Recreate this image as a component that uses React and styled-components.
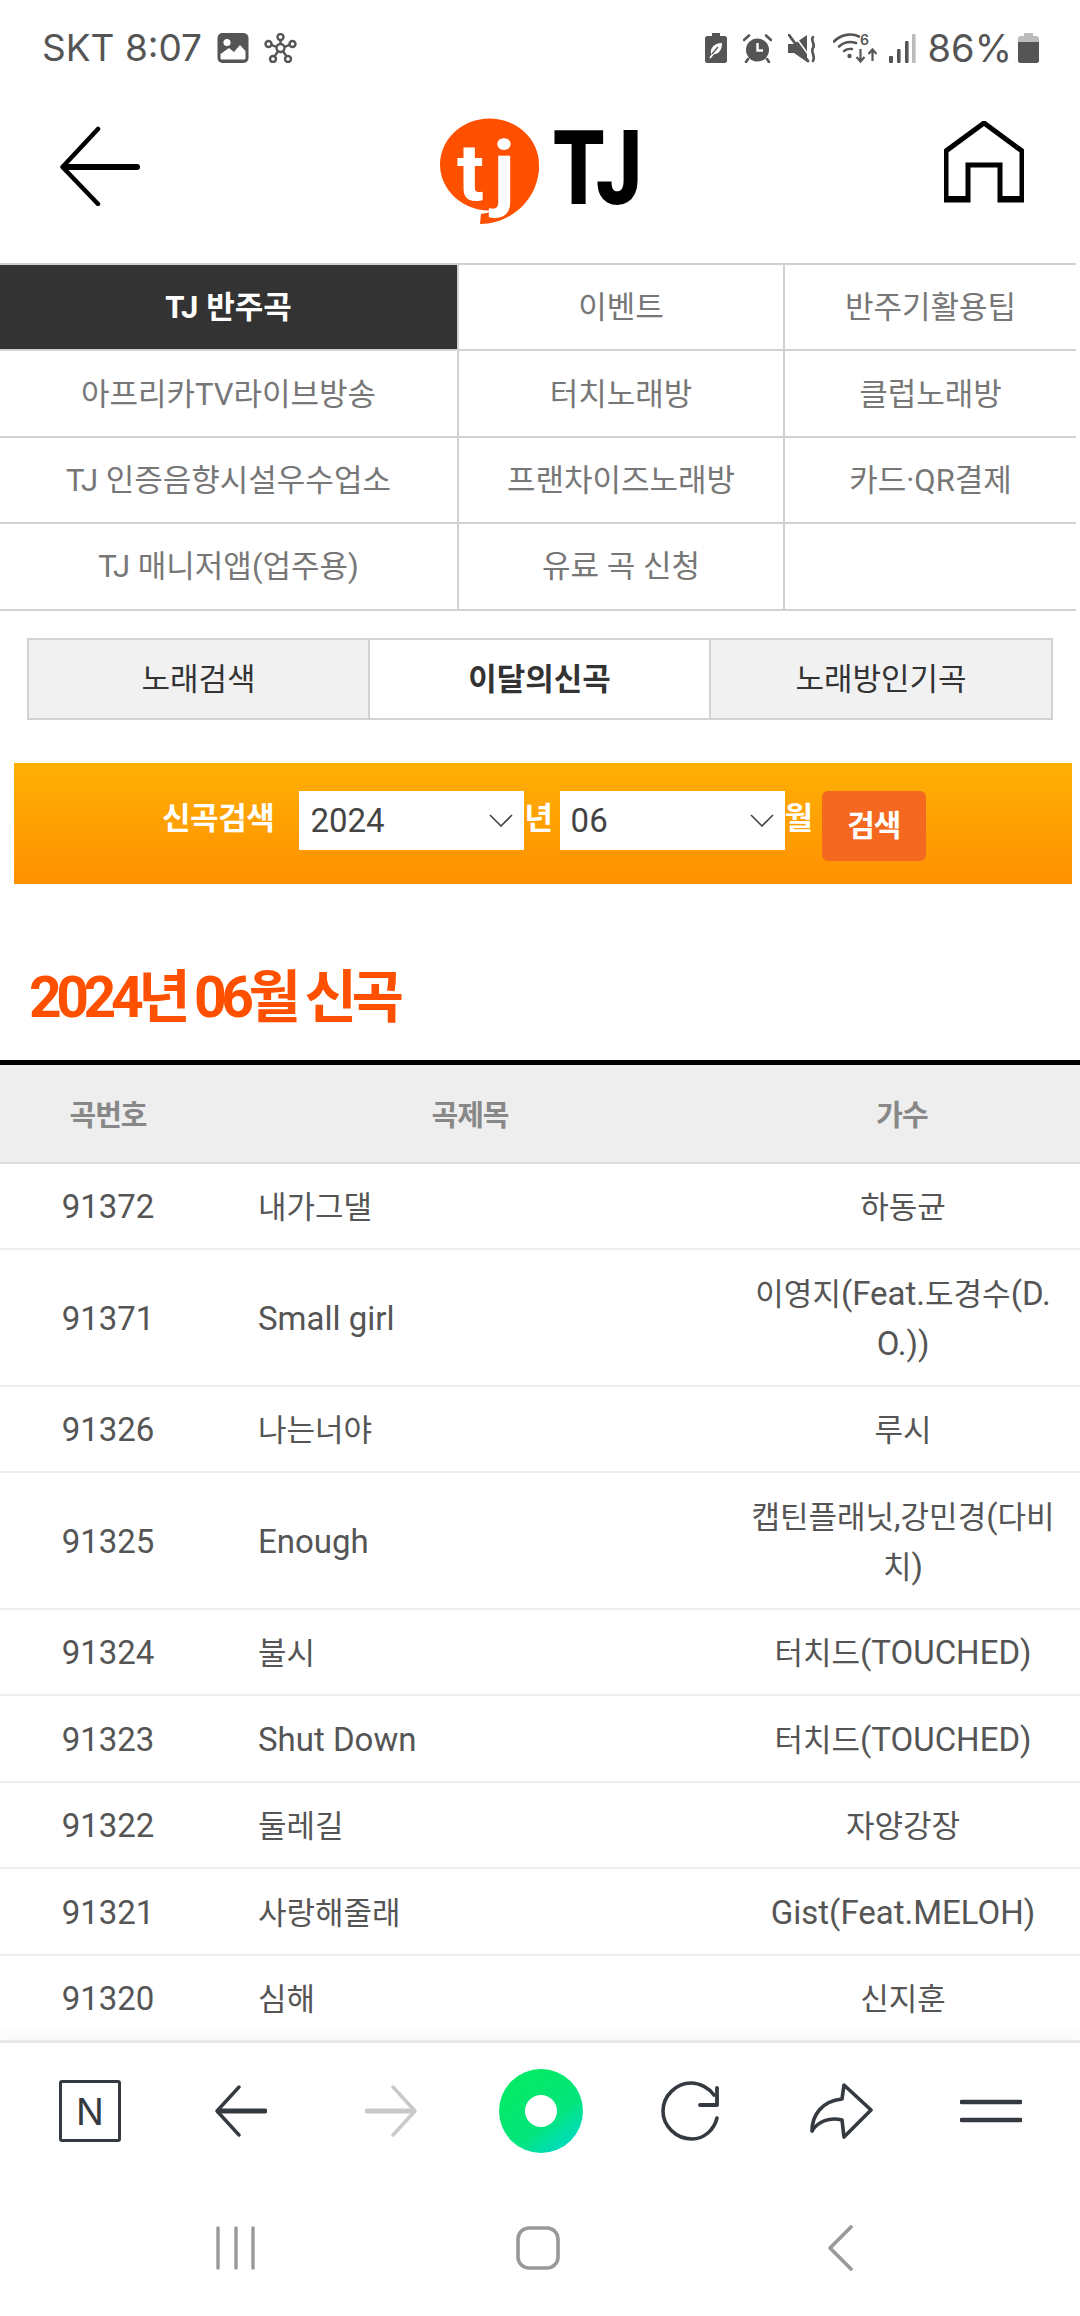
import React from 'react';
import styled, { createGlobalStyle } from 'styled-components';

const Global = createGlobalStyle`
  html, body { margin: 0; padding: 0; background: #fff; }
  body { font-family: Roboto, "Noto Sans CJK KR", sans-serif; }
  * { box-sizing: border-box; }
`;

const Screen = styled.div`
  width: 1080px;
  height: 2316px;
  display: flex;
  flex-direction: column;
  overflow: hidden;
  background: #fff;
`;

const StatusBar = styled.div`
  height: 96px;
  flex: none;
  display: flex;
  align-items: center;
  justify-content: space-between;
  padding: 0 41px 0 42px;
  color: #555;
`;
const StatusGroup = styled.div`
  display: flex;
  align-items: center;
  gap: ${p => p.$gap}px;
`;
const StatusText = styled.span`
  font-family: Inter, Roboto, sans-serif;
  font-size: ${p => p.$size || 37}px;
  line-height: 40px;
  font-weight: 400;
  white-space: nowrap;
`;

const Header = styled.header`
  height: 167px;
  flex: none;
  padding: 0 56px 27px 60px;
  display: flex;
  align-items: center;
  justify-content: space-between;
`;
const Logo = styled.svg`
  display: block;
  margin-left: 2px;
  margin-top: 10px;
`;
const HomeLink = styled.a`
  display: block;
  margin-top: -4px;
`;

const Menu = styled.nav`
  width: 1076px;
  flex: none;
  display: grid;
  grid-template-columns: 459px 326px 291px;
  border-top: 2px solid #d2d2d2;
`;
const MenuCell = styled.div`
  height: 86.4px;
  padding-bottom: 5px;
  display: flex;
  align-items: center;
  justify-content: center;
  border-bottom: 2px solid #d2d2d2;
  border-right: ${p => (p.$last ? 'none' : '2px solid #d2d2d2')};
  background: ${p => (p.$active ? '#333' : '#fff')};
  color: ${p => (p.$active ? '#fff' : '#777')};
  font-size: 31px;
  font-weight: ${p => (p.$active ? 700 : 400)};
`;

const Tabs = styled.div`
  width: 1026px;
  height: 82px;
  flex: none;
  margin: 27px 0 0 27px;
  display: grid;
  grid-template-columns: 339px 343px 1fr;
  border: 2px solid #d2d2d2;
`;
const Tab = styled.div`
  padding-bottom: 4px;
  display: flex;
  align-items: center;
  justify-content: center;
  background: ${p => (p.$active ? '#fff' : '#f1f1f1')};
  border-left: ${p => (p.$active ? '2px solid #d2d2d2' : 'none')};
  border-right: ${p => (p.$active ? '2px solid #d2d2d2' : 'none')};
  color: #333;
  font-size: 31px;
  font-weight: ${p => (p.$active ? 700 : 400)};
`;

const SearchBand = styled.div`
  width: 1058px;
  height: 121px;
  flex: none;
  margin: 43px 0 0 14px;
  padding: 28px 0 0 148px;
  display: flex;
  align-items: flex-start;
  background: linear-gradient(#ffb005, #ff9000);
`;
const BandLabel = styled.span`
  color: #fff;
  font-size: 31px;
  font-weight: 700;
  line-height: 56px;
  letter-spacing: -0.4px;
  margin: ${p => p.$margin || '0'};
  white-space: nowrap;
`;
const SelectBox = styled.div`
  width: 225px;
  height: 59px;
  padding: 0 11px;
  display: flex;
  align-items: center;
  justify-content: space-between;
  background: #fff;
  color: #444;
  font-size: 33px;
`;
const SearchButton = styled.button`
  width: 104px;
  height: 70px;
  margin-left: 9px;
  padding: 0 0 5px;
  border: 0;
  border-radius: 6px;
  background: #f4691f;
  color: #fff;
  font-family: inherit;
  font-size: 30px;
  font-weight: 700;
  letter-spacing: -1px;
`;

const PageTitle = styled.h2`
  height: 176px;
  flex: none;
  margin: 0;
  padding: 85px 0 0 29px;
  font-size: 57px;
  line-height: 58px;
  font-weight: 700;
  letter-spacing: -5.4px;
  color: #ff5000;
  white-space: nowrap;
`;

const SongTable = styled.table`
  width: 1080px;
  flex: none;
  table-layout: fixed;
  border-collapse: separate;
  border-spacing: 0;
  border-top: 5px solid #000;
`;
const HeadCell = styled.th`
  height: 99px;
  padding: 0;
  background: #eee;
  border-bottom: 2px solid #ddd;
  color: #888;
  font-size: 29px;
  font-weight: 700;
  letter-spacing: -1px;
  text-align: center;
`;
const Cell = styled.td`
  padding: 19.75px ${p => (p.$artist ? '16px' : '0')} 14.75px ${p => (p.$title ? '42px' : p.$artist ? '18px' : '0')};
  border-bottom: 2px solid #eee;
  color: #555;
  font-size: 31px;
  line-height: 50px;
  font-weight: 400;
  text-align: ${p => (p.$title ? 'left' : 'center')};
  word-break: break-all;
`;
const LatinRun = styled.span`
  font-size: 33px;
  line-height: 1;
`;

const Content = styled.main`
  flex: 1;
  min-height: 0;
  display: flex;
  flex-direction: column;
  overflow: hidden;
`;

const Toolbar = styled.div`
  height: 138px;
  flex: none;
  display: grid;
  grid-template-columns: repeat(7, 150px);
  padding-left: 16px;
  place-items: center;
  background: #fff;
  border-top: 2px solid #e4e6e8;
  box-shadow: 0 -8px 12px rgba(60, 70, 90, 0.035);
  position: relative;
`;
const NaverBox = styled.div`
  width: 62px;
  height: 62px;
  margin-left: -2px;
  display: flex;
  align-items: center;
  justify-content: center;
  border: 3.5px solid #343a40;
  border-radius: 3px;
  color: #343a40;
  font-family: Inter, Roboto, sans-serif;
  font-size: 37px;
  line-height: 1;
  font-weight: 400;
`;
const SystemNav = styled.div`
  height: 137px;
  flex: none;
  display: grid;
  grid-template-columns: repeat(3, 302px);
  padding-left: 85px;
  place-items: center;
`;

const Svg = ({ w, h, children, ...rest }) => (
  <svg width={w} height={h} viewBox={`0 0 ${w} ${h}`} fill="none" {...rest}>{children}</svg>
);

const GalleryIcon = () => (
  <Svg w={32} h={30}>
    <rect x="0.5" y="0" width="31" height="30" rx="5" fill="#555" />
    <circle cx="10" cy="9.5" r="3.6" fill="#fff" />
    <path d="M3.5 25 V21 L12 15 L17 19 L23 12 L28.5 18 V25 Q28.5 26.5 27 26.5 H5 Q3.5 26.5 3.5 25Z" fill="#fff" />
  </Svg>
);
const HubIcon = () => (
  <Svg w={33} h={30}>
    <g stroke="#555" strokeWidth="2.4">
      <circle cx="16.5" cy="15" r="4" />
      <circle cx="16.5" cy="4" r="3" />
      <circle cx="28.5" cy="11" r="3" />
      <circle cx="4.5" cy="11" r="3" />
      <circle cx="9" cy="26" r="3" />
      <circle cx="24" cy="26" r="3" />
      <path d="M16.5 7V11M25.6 11.8L20.4 14M7.4 11.8L12.6 14M10.5 23.4L14 18.3M22.5 23.4L19 18.3" />
    </g>
  </Svg>
);
const LeafBattery = () => (
  <Svg w={22} h={30}>
    <path d="M7 0H15V3H19.5Q22 3 22 5.5V27.5Q22 30 19.5 30H2.5Q0 30 0 27.5V5.5Q0 3 2.5 3H7Z" fill="#555" />
    <path d="M6 21C5 14 10 10 17 10C17 18 13 22 7 21Z" fill="#fff" />
    <path d="M5 25L12 16" stroke="#fff" strokeWidth="1.8" />
    <path d="M7 21L13 14" stroke="#555" strokeWidth="1.4" />
  </Svg>
);
const AlarmIcon = () => (
  <Svg w={29} h={29}>
    <circle cx="14.5" cy="16" r="11.5" fill="#555" />
    <path d="M1 6L6 1.5M28 6L23 1.5M5 25L3 28M24 25L26 28" stroke="#555" strokeWidth="2.6" strokeLinecap="round" />
    <path d="M14.5 9V16.5H20" stroke="#fff" strokeWidth="2.4" />
  </Svg>
);
const MuteIcon = () => (
  <Svg w={29} h={29}>
    <path d="M0 10H6L19 1V28L6 19H0Z" fill="#555" />
    <path d="M1 0L22 29" stroke="#fff" strokeWidth="1.5" transform="translate(3 -2)" />
    <path d="M1 1L20 27" stroke="#555" strokeWidth="2.8" strokeLinecap="round" />
    <path d="M25 3C22 7 28 10 25 14C22 18 28 21 25 27" stroke="#555" strokeWidth="2.6" strokeLinecap="round" />
  </Svg>
);
const WifiSmallText = styled.text`
  font-family: Inter, Roboto, sans-serif;
  font-size: 14px;
  font-weight: 600;
  fill: #555;
`;
const WifiIcon = () => (
  <Svg w={44} h={30}>
    <path d="M1 8.5C8 1 19 0 26 3.5" stroke="#555" strokeWidth="2.6" strokeLinecap="round" />
    <path d="M6 13.5C11 9 17 8 23 10" stroke="#555" strokeWidth="2.6" strokeLinecap="round" />
    <path d="M11 18C13.5 16 16 15.5 19 16" stroke="#555" strokeWidth="2.4" strokeLinecap="round" />
    <circle cx="16.5" cy="23" r="2.2" fill="#555" />
    <WifiSmallText x="27" y="12">6</WifiSmallText>
    <path d="M27.5 16V28M23.5 24L27.5 28.5L31.5 24M39.5 28V17M35.5 21L39.5 16.5L43.5 21" stroke="#555" strokeWidth="2.2" />
  </Svg>
);
const SignalIcon = () => (
  <Svg w={27} h={29}>
    <rect x="0" y="22" width="4" height="7" rx="1" fill="#555" />
    <rect x="8" y="15" width="3.6" height="14" rx="1" fill="#555" />
    <rect x="16" y="7" width="3.6" height="22" rx="1" fill="#555" />
    <rect x="23" y="0" width="3.6" height="29" rx="1" fill="#bbb" />
  </Svg>
);
const BatteryIcon = () => (
  <Svg w={21} h={30}>
    <path d="M6 0H15V3H18.5Q21 3 21 5.5V9H0V5.5Q0 3 2.5 3H6Z" fill="#bbb" />
    <path d="M0 9H21V27.5Q21 30 18.5 30H2.5Q0 30 0 27.5Z" fill="#555" />
  </Svg>
);
const HeaderBack = () => (
  <Svg w={80} h={80}>
    <path d="M38 3L2.5 41L38 78" stroke="#000" strokeWidth="4.5" strokeLinecap="round" strokeLinejoin="round" fill="none" />
    <path d="M4 41H77" stroke="#000" strokeWidth="6" strokeLinecap="round" />
  </Svg>
);
const HeaderHome = () => (
  <Svg w={80} h={82}>
    <path d="M2 79V30L40 2L78 30V79H56V44H24V79Z" stroke="#000" strokeWidth="5" strokeLinejoin="miter" />
    <path d="M0 78H26M54 78H80" stroke="#000" strokeWidth="6" />
  </Svg>
);
const LogoMark = () => (
  <Logo width="206" height="106" viewBox="0 0 206 106">
    <ellipse cx="49.5" cy="46.5" rx="49.5" ry="46" fill="#ff5000" />
    <path d="M99 48C99 80 72 106 40 106L41 96C70 92 84 72 86 48Z" fill="#ff5000" />
    <text x="17" y="82" fontFamily="Roboto, sans-serif" fontSize="80" fontWeight="700" fill="#fff">t</text>
    <text x="53" y="82" fontFamily="Roboto, sans-serif" fontSize="84" fontWeight="700" fill="#fff">j</text>
    <text x="113" y="86" fontFamily="Roboto, sans-serif" fontSize="104" fontWeight="900" fill="#000" textLength="89" lengthAdjust="spacingAndGlyphs">TJ</text>
  </Logo>
);
const Chevron = () => (
  <Svg w={24} h={13}>
    <path d="M1 1L12 12L23 1" stroke="#444" strokeWidth="1.6" />
  </Svg>
);
const ToolBack = ({ color = '#343a40', flip }) => (
  <Svg w={52} h={52} style={flip ? { transform: 'scaleX(-1)' } : undefined}>
    <path d="M24 2L2 26L24 50" stroke={color} strokeWidth="3.4" strokeLinecap="round" strokeLinejoin="round" />
    <path d="M4 26H50" stroke={color} strokeWidth="5" strokeLinecap="round" />
  </Svg>
);
const GreenDot = () => (
  <Svg w={84} h={84}>
    <defs>
      <linearGradient id="greenDot" x1="0.3" y1="0.2" x2="0.85" y2="0.95">
        <stop offset="0" stopColor="#03e968" />
        <stop offset="0.55" stopColor="#03e57c" />
        <stop offset="1" stopColor="#00d9c8" />
      </linearGradient>
    </defs>
    <path fillRule="evenodd" d="M42 0a42 42 0 1 0 0 84a42 42 0 1 0 0-84ZM42 26a16 16 0 1 1 0 32a16 16 0 1 1 0-32Z" fill="url(#greenDot)" />
  </Svg>
);
const ReloadIcon = () => (
  <Svg w={60} h={60}>
    <path d="M56 37C53 49 43 58 31 58C15 58 2 45 2 30C2 15 15 2 30 2C39 2 48 7 53 14" stroke="#343a40" strokeWidth="3.6" strokeLinecap="round" />
    <path d="M56 7V24H39" stroke="#343a40" strokeWidth="3.8" strokeLinecap="round" strokeLinejoin="round" />
  </Svg>
);
const ShareIcon = () => (
  <Svg w={63} h={56}>
    <path d="M34 2L61 27L34 54L32 37C20 34 8 38 2 48C2 32 12 18 32 16Z" stroke="#343a40" strokeWidth="3.6" strokeLinejoin="round" />
  </Svg>
);
const BurgerIcon = () => (
  <Svg w={62} h={24}>
    <path d="M1.5 3H60.5M1.5 21H60.5" stroke="#343a40" strokeWidth="4.4" strokeLinecap="round" />
  </Svg>
);
const RecentsIcon = () => (
  <Svg w={40} h={44}>
    <path d="M2 2V42M20 2V42M37 2V42" stroke="#999" strokeWidth="3.4" strokeLinecap="round" />
  </Svg>
);
const HomeIcon = () => (
  <Svg w={44} h={44}>
    <rect x="2" y="2" width="40" height="40" rx="11" stroke="#999" strokeWidth="3.6" />
  </Svg>
);
const SysBack = () => (
  <Svg w={26} h={46}>
    <path d="M24 2L3 23L24 44" stroke="#999" strokeWidth="3.6" strokeLinecap="round" strokeLinejoin="round" />
  </Svg>
);

const menuItems = [
  'TJ 반주곡', '이벤트', '반주기활용팁',
  '아프리카TV라이브방송', '터치노래방', '클럽노래방',
  'TJ 인증음향시설우수업소', '프랜차이즈노래방', '카드·QR결제',
  'TJ 매니저앱(업주용)', '유료 곡 신청', '',
];
const songs = [
  ['91372', '내가그댈', '하동균'],
  ['91371', 'Small girl', '이영지(Feat.도경수(D.O.))'],
  ['91326', '나는너야', '루시'],
  ['91325', 'Enough', '캡틴플래닛,강민경(다비치)'],
  ['91324', '불시', '터치드(TOUCHED)'],
  ['91323', 'Shut Down', '터치드(TOUCHED)'],
  ['91322', '둘레길', '자양강장'],
  ['91321', '사랑해줄래', 'Gist(Feat.MELOH)'],
  ['91320', '심해', '신지훈'],
];

// The table's Latin letters and digits run larger than its Hangul.
const Mixed = ({ text }) =>
  text.split(/([\x20-\x7e]+)/).filter(Boolean).map((part, i) =>
    /^[\x20-\x7e]/.test(part) ? <LatinRun key={i}>{part}</LatinRun> : part
  );

export default function App() {
  return (
    <Screen>
      <Global />
      <StatusBar>
        <StatusGroup $gap={15}>
          <StatusText>SKT 8:07</StatusText>
          <StatusGroup $gap={15}>
            <GalleryIcon />
            <HubIcon />
          </StatusGroup>
        </StatusGroup>
        <StatusGroup $gap={12}>
          <StatusGroup $gap={16}>
            <LeafBattery />
            <AlarmIcon />
            <MuteIcon />
            <WifiIcon />
          </StatusGroup>
          <SignalIcon />
          <StatusGroup $gap={6}>
            <StatusText $size={38}>86%</StatusText>
            <BatteryIcon />
          </StatusGroup>
        </StatusGroup>
      </StatusBar>
      <Header>
        <HeaderBack />
        <LogoMark />
        <HomeLink><HeaderHome /></HomeLink>
      </Header>
      <Content>
        <Menu>
          {menuItems.map((m, i) => (
            <MenuCell key={i} $active={i === 0} $last={i % 3 === 2}>{m}</MenuCell>
          ))}
        </Menu>
        <Tabs>
          <Tab>노래검색</Tab>
          <Tab $active>이달의신곡</Tab>
          <Tab>노래방인기곡</Tab>
        </Tabs>
        <SearchBand>
          <BandLabel $margin="0 25px 0 0">신곡검색</BandLabel>
          <SelectBox>2024<Chevron /></SelectBox>
          <BandLabel $margin="0 7px 0 0">년</BandLabel>
          <SelectBox>06<Chevron /></SelectBox>
          <BandLabel>월</BandLabel>
          <SearchButton>검색</SearchButton>
        </SearchBand>
        <PageTitle>2024년 06월 신곡</PageTitle>
        <SongTable>
          <colgroup>
            <col width="216" />
            <col width="508" />
            <col width="356" />
          </colgroup>
          <thead>
            <tr>
              <HeadCell>곡번호</HeadCell>
              <HeadCell>곡제목</HeadCell>
              <HeadCell>가수</HeadCell>
            </tr>
          </thead>
          <tbody>
            {songs.map(s => (
              <tr key={s[0]}>
                <Cell><Mixed text={s[0]} /></Cell>
                <Cell $title><Mixed text={s[1]} /></Cell>
                <Cell $artist><Mixed text={s[2]} /></Cell>
              </tr>
            ))}
          </tbody>
        </SongTable>
      </Content>
      <Toolbar>
        <NaverBox>N</NaverBox>
        <ToolBack />
        <ToolBack color="#c9c9c9" flip />
        <GreenDot />
        <ReloadIcon />
        <ShareIcon />
        <BurgerIcon />
      </Toolbar>
      <SystemNav>
        <RecentsIcon />
        <HomeIcon />
        <SysBack />
      </SystemNav>
    </Screen>
  );
}
